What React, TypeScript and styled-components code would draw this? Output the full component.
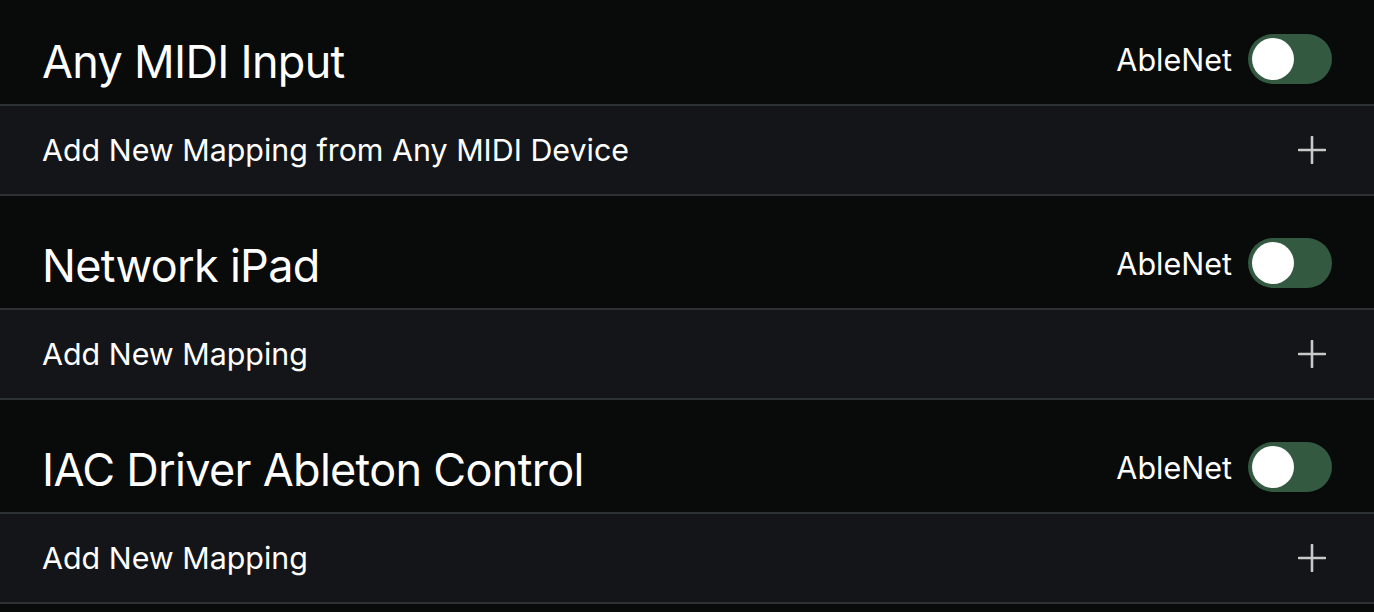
import React from 'react';
import styled, {createGlobalStyle} from 'styled-components';

type Device = {
    name: string
    mappingLabel: string
}

const devices: Device[] = [
    {name: "Any MIDI Input", mappingLabel: "Add New Mapping from Any MIDI Device"},
    {name: "Network iPad", mappingLabel: "Add New Mapping"},
    {name: "IAC Driver Ableton Control", mappingLabel: "Add New Mapping"},
];

export default function App() {
    const [enabled, setEnabled] = React.useState<boolean[]>(devices.map(() => false));

    function toggle(index: number) {
        setEnabled(enabled.map((value, i) => i === index ? !value : value));
    }

    return <>
        <GlobalStyle/>
        <StyledPage>
            {devices.map((device, index) =>
                <StyledSection key={device.name}>
                    <StyledHeader>
                        <StyledTitle>{device.name}</StyledTitle>
                        <StyledControls>
                            <StyledLabel>AbleNet</StyledLabel>
                            <StyledSwitch type="button" $on={enabled[index]} onClick={() => toggle(index)}>
                                <StyledKnob/>
                            </StyledSwitch>
                        </StyledControls>
                    </StyledHeader>
                    <StyledRow>
                        <StyledRowText>{device.mappingLabel}</StyledRowText>
                        <StyledAddButton type="button" aria-label="Add mapping">
                            <svg width="28" height="28" viewBox="0 0 28 28">
                                <path d="M14 1V27M1 14H27" stroke="currentColor" strokeWidth="2.6" strokeLinecap="round"/>
                            </svg>
                        </StyledAddButton>
                    </StyledRow>
                </StyledSection>
            )}
        </StyledPage>
    </>;
}

const GlobalStyle = createGlobalStyle`
  body {
    margin: 0;
    background-color: #090a0a;
    font-family: Inter, "Noto Sans", sans-serif;
    color: #ffffff;
  }
`

const StyledPage = styled.main`
  display: flex;
  flex-direction: column;
  gap: 8px;
`

const StyledSection = styled.section`
  display: flex;
  flex-direction: column;
`

const StyledHeader = styled.header`
  height: 106px;
  box-sizing: border-box;
  padding: 18px 42px 0 42px;
  display: flex;
  align-items: center;
  justify-content: space-between;
  background-color: #090a0a;
  border-bottom: 2px solid #2a3034;
`

const StyledTitle = styled.h2`
  margin: 0;
  font-size: 45px;
  font-weight: 400;
  letter-spacing: -0.7px;
`

const StyledControls = styled.div`
  display: flex;
  align-items: center;
  gap: 16px;
  margin-bottom: 4px;
`

const StyledLabel = styled.span`
  font-size: 30.5px;
`

const StyledSwitch = styled.button<{ $on: boolean }>`
  width: 84px;
  height: 50px;
  padding: 4px;
  border: none;
  border-radius: 25px;
  background-color: ${props => props.$on ? "#3f8f57" : "#335a40"};
  display: flex;
  justify-content: ${props => props.$on ? "flex-end" : "flex-start"};
  cursor: pointer;
`

const StyledKnob = styled.span`
  width: 42px;
  height: 42px;
  border-radius: 50%;
  background-color: #ffffff;
`

const StyledRow = styled.div`
  height: 90px;
  box-sizing: border-box;
  padding: 0 48px 0 42px;
  display: flex;
  align-items: center;
  justify-content: space-between;
  background-color: #141518;
  border-bottom: 2px solid #2a3034;
`

const StyledRowText = styled.span`
  font-size: 30.4px;
`

const StyledAddButton = styled.button`
  border: none;
  background: transparent;
  padding: 0;
  color: #c9c9c9;
  display: flex;
  cursor: pointer;
`
